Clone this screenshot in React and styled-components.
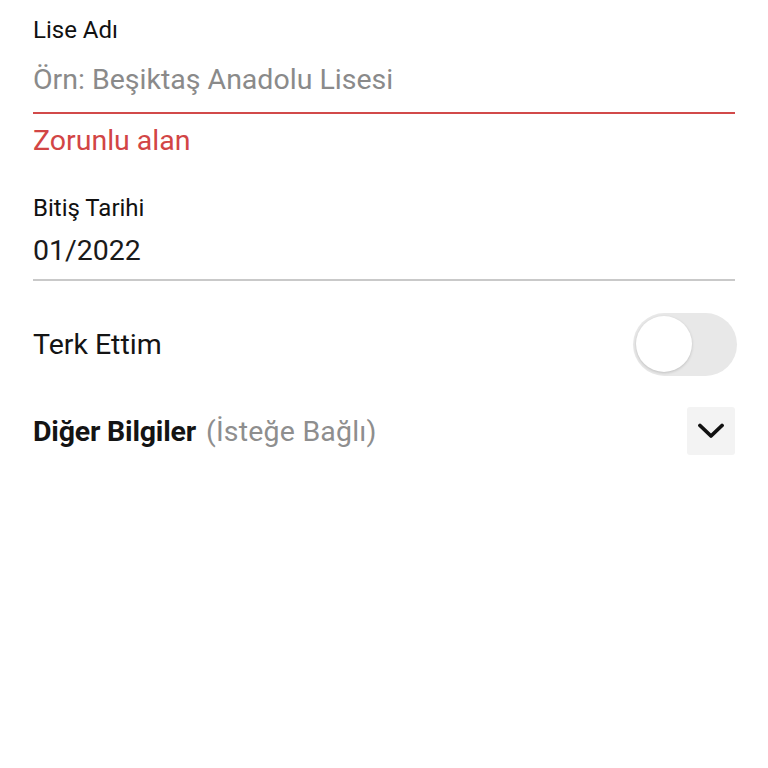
import React from "react";
import styled, { createGlobalStyle } from "styled-components";

const Global = createGlobalStyle`
  html, body { margin: 0; padding: 0; background: #ffffff; }
  body { font-family: Roboto, "Noto Sans", Arial, sans-serif; -webkit-font-smoothing: antialiased; }
`;

const Page = styled.div`
  padding: 15px 33px 0 33px;
  display: flex;
  flex-direction: column;
`;

const Field = styled.div`
  display: flex;
  flex-direction: column;
  margin-bottom: ${(p) => p.$mb || 0}px;
`;

const Label = styled.div`
  font-size: 24px;
  line-height: 30px;
  color: #111;
`;

const Value = styled.div`
  font-size: 28.5px;
  line-height: 36px;
  color: ${(p) => (p.$placeholder ? "#8a8a8a" : "#1a1a1a")};
  padding: ${(p) => p.$pt}px 0 ${(p) => p.$pb}px;
  border-bottom: 2px solid ${(p) => (p.$error ? "#d24a4a" : "#c9c9c9")};
`;

const Error = styled.div`
  font-size: 28.5px;
  line-height: 36px;
  color: #d24545;
  margin-top: 9px;
`;

const Row = styled.div`
  display: flex;
  align-items: center;
  justify-content: space-between;
  height: ${(p) => p.$h}px;
  margin-top: ${(p) => p.$mt}px;
`;

const RowText = styled.div`
  font-size: 28.5px;
  color: #141414;
  font-weight: ${(p) => (p.$bold ? 700 : 400)};
  letter-spacing: ${(p) => (p.$bold ? "-0.2px" : "0")};
`;

const Muted = styled.span`
  font-weight: 400;
  color: #8e8e8e;
  margin-left: 10px;
  letter-spacing: 0.2px;
`;

const Track = styled.div`
  width: 104px;
  height: 63px;
  border-radius: 32px;
  background: #e8e8e8;
  display: flex;
  align-items: center;
  padding: 0 3px;
  box-sizing: border-box;
  margin-right: -2px;
`;

const Knob = styled.div`
  width: 56px;
  height: 56px;
  border-radius: 50%;
  background: #fff;
  box-shadow: 0 1px 3px rgba(0, 0, 0, 0.18);
`;

const ChevronButton = styled.button`
  width: 48px;
  height: 48px;
  border: none;
  border-radius: 3px;
  background: #f3f3f3;
  display: flex;
  align-items: center;
  justify-content: center;
  padding: 0;
`;

export default function App() {
  return (
    <>
      <Global />
      <Page>
        <Field $mb={34}>
          <Label>Lise Adı</Label>
          <Value $placeholder $error $pt={17} $pb={14}>Örn: Beşiktaş Anadolu Lisesi</Value>
          <Error>Zorunlu alan</Error>
        </Field>
        <Field>
          <Label>Bitiş Tarihi</Label>
          <Value $pt={10} $pb={10}>01/2022</Value>
        </Field>
        <Row $h={64} $mt={31}>
          <RowText>Terk Ettim</RowText>
          <Track>
            <Knob />
          </Track>
        </Row>
        <Row $h={48} $mt={31}>
          <RowText $bold>
            Diğer Bilgiler<Muted>(İsteğe Bağlı)</Muted>
          </RowText>
          <ChevronButton aria-label="Genişlet">
            <svg width="26" height="16" viewBox="0 0 26 16">
              <path d="M2 2.5 L13 13 L24 2.5" fill="none" stroke="#111" strokeWidth="3.8" strokeLinecap="round" strokeLinejoin="round" />
            </svg>
          </ChevronButton>
        </Row>
      </Page>
    </>
  );
}
